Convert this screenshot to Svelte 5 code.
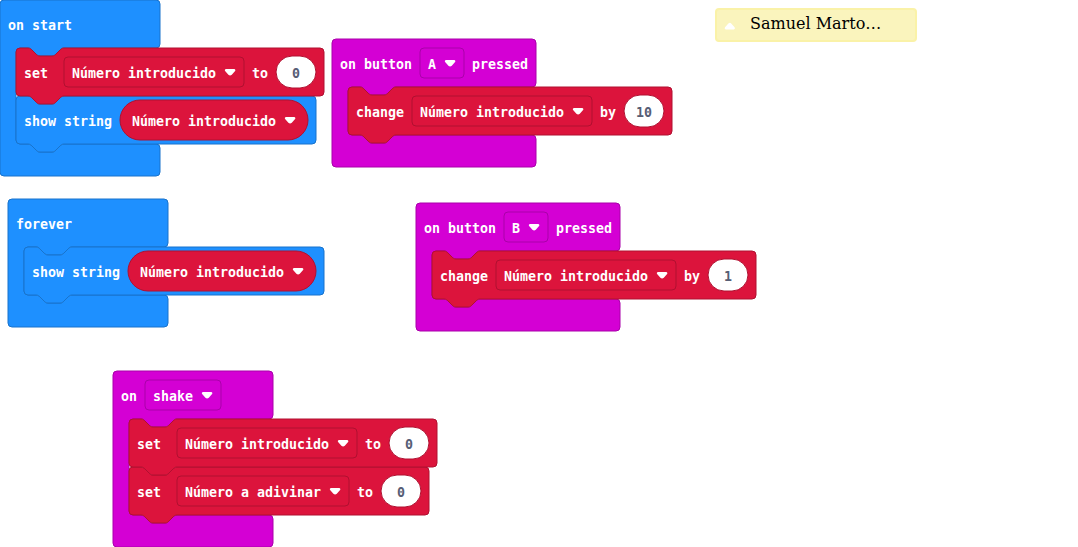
<script>
  const BLUE = { fill: '#1e90ff', stroke: '#1873cc' };
  const RED = { fill: '#dc143c', stroke: '#b01030' };
  const PURPLE = { fill: '#d400d4', stroke: '#aa00aa' };

  const NOTCH_R = 'c2,0 3,1 4,2 l4,4 c1,1 2,2 4,2 h12 c2,0 3,-1 4,-2 l4,-4 c1,-1 2,-2 4,-2';
  const NOTCH_L = 'c-2,0 -3,1 -4,2 l-4,4 c-1,1 -2,2 -4,2 h-12 c-2,0 -3,-1 -4,-2 l-4,-4 c-1,-1 -2,-2 -4,-2';

  const hat = (w, inner) =>
    `M0,4 a4,4 0 0 1 4,-4 H${w - 4} a4,4 0 0 1 4,4 V44 a4,4 0 0 1 -4,4 H64 ${NOTCH_L} H20 a4,4 0 0 0 -4,4 v${inner - 8} a4,4 0 0 0 4,4 h8 ${NOTCH_R} H${w - 4} a4,4 0 0 1 4,4 v24 a4,4 0 0 1 -4,4 H4 a4,4 0 0 1 -4,-4 z`;
  const statement = (w) =>
    `M0,4 a4,4 0 0 1 4,-4 h8 ${NOTCH_R} H${w - 4} a4,4 0 0 1 4,4 v40 a4,4 0 0 1 -4,4 H48 ${NOTCH_L} H4 a4,4 0 0 1 -4,-4 z`;

  const label = (x, text) => ({ kind: 'label', x, text });
  const menu = (x, w, text) => ({ kind: 'menu', x, w, text });
  const variable = (x, w, text) => ({ kind: 'variable', x, w, text });
  const number = (x, text) => ({ kind: 'number', x, text });

  const show = () => ({
    w: 300, color: BLUE,
    fields: [label(8, 'show string'), variable(104, 188, 'Número introducido')]
  });
  const set = (w, name) => ({
    w, color: RED,
    fields: [label(8, 'set'), menu(48, w - 128, name), label(w - 72, 'to'), number(w - 28, '0')]
  });
  const change = (by) => ({
    w: 324, color: RED,
    fields: [label(8, 'change'), menu(64, 180, 'Número introducido'), label(252, 'by'), number(296, by)]
  });

  const stacks = [
    { x: 0, y: 0, w: 160, color: BLUE, fields: [label(8, 'on start')],
      body: [set(308, 'Número introducido'), show()] },
    { x: 8, y: 199, w: 160, color: BLUE, fields: [label(8, 'forever')], body: [show()] },
    { x: 332, y: 39, w: 204, color: PURPLE,
      fields: [label(8, 'on button'), menu(88, 44, 'A'), label(140, 'pressed')], body: [change('10')] },
    { x: 416, y: 203, w: 204, color: PURPLE,
      fields: [label(8, 'on button'), menu(88, 44, 'B'), label(140, 'pressed')], body: [change('1')] },
    { x: 113, y: 371, w: 160, color: PURPLE,
      fields: [label(8, 'on'), menu(32, 76, 'shake')],
      body: [set(308, 'Número introducido'), set(300, 'Número a adivinar')] }
  ];
</script>

{#snippet words(x, text, cls)}
  <text class={cls} {x} y="30" textLength={text.length * 8} lengthAdjust="spacingAndGlyphs">{text}</text>
{/snippet}

{#snippet arrow(x)}
  <path class="arrow" d="M{x + 0.7},20.9 h8.8 q1.6,0.7 0.6,2.2 l-3.3,3.7 q-1.7,1.6 -3.4,0 l-3.3,-3.7 q-1,-1.5 0.6,-2.2 z" />
{/snippet}

{#snippet fieldset(fields, color)}
  {#each fields as f}
    {#if f.kind === 'label'}
      {@render words(f.x, f.text, 'word')}
    {:else if f.kind === 'menu'}
      <rect x={f.x} y="9" width={f.w} height="30" rx="4" fill={color.fill} stroke={color.stroke} />
      {@render words(f.x + 8, f.text, 'word')}
      {@render arrow(f.x + f.w - 19)}
    {:else if f.kind === 'variable'}
      <rect x={f.x} y="4" width={f.w} height="40" rx="20" fill={RED.fill} stroke={RED.stroke} />
      {@render words(f.x + 12, f.text, 'word')}
      {@render arrow(f.x + f.w - 23)}
    {:else}
      <rect x={f.x - 20} y="8" width="40" height="32" rx="16" fill="#fff" stroke={color.stroke} />
      {@render words(f.x - f.text.length * 4, f.text, 'digit')}
    {/if}
  {/each}
{/snippet}

<main>
  <svg class="blocks" width="1078" height="547" viewBox="0 0 1078 547">
    {#each stacks as s}
      <g transform="translate({s.x} {s.y})">
        <path d={hat(s.w, s.body.length * 48)} fill={s.color.fill} stroke={s.color.stroke} />
        {@render fieldset(s.fields, s.color)}
        {#each s.body.map((b, i) => ({ b, i })).reverse() as { b, i }}
          <g transform="translate(16 {48 + i * 48})">
            <path d={statement(b.w)} fill={b.color.fill} stroke={b.color.stroke} />
            {@render fieldset(b.fields, b.color)}
          </g>
        {/each}
      </g>
    {/each}
  </svg>
  <div class="comment">
    <svg width="12" height="8" viewBox="0 0 12 8"><path d="M1.6,7.4 Q0,6.6 1,5.2 L4.4,1.4 Q6,0 7.2,1.4 L10.6,5.2 Q11.6,6.6 10,7.4 z" fill="#fff" /></svg>
    <span>Samuel Marto…</span>
  </div>
</main>

<style>
  :global(body) {
    background: #fff;
    overflow: hidden;
  }
  main {
    position: relative;
    width: 1078px;
    height: 547px;
    overflow: hidden;
  }
  .blocks {
    display: block;
  }
  .word,
  .digit {
    font: bold 14.5px 'DejaVu Sans Mono', monospace;
    fill: #fff;
  }
  .digit {
    fill: #575e75;
  }
  .arrow {
    fill: #fff;
  }
  .comment {
    position: absolute;
    left: 715px;
    top: 8px;
    box-sizing: border-box;
    width: 202px;
    height: 34px;
    display: flex;
    align-items: center;
    padding-left: 7px;
    border: 2px solid #faf2a8;
    border-radius: 4px;
    background: #faf4bd;
  }
  .comment svg {
    margin: 2px 14px 0 0;
  }
  .comment span {
    font: 16px/20px 'DejaVu Serif', serif;
    color: #000;
    margin-top: -2px;
  }
</style>
